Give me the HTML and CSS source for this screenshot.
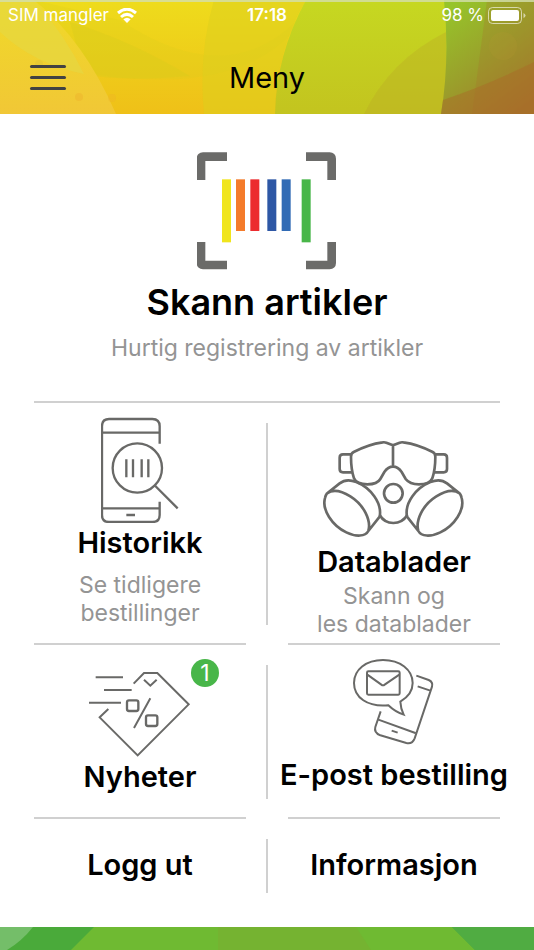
FILE: index.html
```html
<!DOCTYPE html>
<html lang="no">

<head>
    <meta charset="utf-8">
    <meta name="viewport" content="width=device-width, initial-scale=1">
    <title>Meny</title>
    <link rel="stylesheet" href="styles.css">
</head>

<body>
    <header class="header">
        <svg class="header-art" viewBox="0 0 534 114" preserveAspectRatio="none" aria-hidden="true">
            <defs>
                <linearGradient id="yellow" x1="0" y1="0" x2="0" y2="1">
                    <stop offset="0" stop-color="#eedc1c" />
                    <stop offset="1" stop-color="#efc018" />
                </linearGradient>
                <linearGradient id="pale" x1="0" y1="0" x2="0" y2="1">
                    <stop offset="0" stop-color="#f0da28" />
                    <stop offset="1" stop-color="#f1c736" />
                </linearGradient>
                <linearGradient id="lime" x1="0" y1="0" x2="0" y2="1">
                    <stop offset="0" stop-color="#c6d821" />
                    <stop offset="1" stop-color="#c3c41f" />
                </linearGradient>
                <linearGradient id="earth" x1="0.200" y1="0" x2="0.800" y2="1">
                    <stop offset="0" stop-color="#96c42a" />
                    <stop offset="0.5" stop-color="#9aa02b" />
                    <stop offset="1" stop-color="#a4782b" />
                </linearGradient>
            </defs>
            <rect width="534" height="114" fill="url(#yellow)" />
            <path d="M0 32Q60 84 180 79Q280 72 314 0Q240 100 120 20L34 0Z" fill="#d8cc1e" opacity="0.2" />
            <path d="M70 22Q130 40 190 76Q120 82 84 74Z" fill="#d8cc1e" opacity="0.35" />
            <path d="M204 0H306Q276 50 275 114H204Q198 55 214 0Z" fill="#dccf1e" opacity="0.5" />
            <path d="M0 0H34Q84 40 116 114H0Z" fill="url(#pale)" />
            <path d="M0 32Q34 64 84 74Q65 35 34 0H0Z" fill="#e2da48" opacity="0.5" />
            <path d="M306 0H534V114H275Q276 55 306 0Z" fill="url(#lime)" />
            <path d="M364 114Q390 60 446 32V114Z" fill="#bba824" opacity="0.35" />
            <path d="M444 0H534V114H441Q450 60 444 0Z" fill="url(#earth)" />
            <path d="M487 0H534V114H472Q480 55 487 0Z" fill="#a66e2c" opacity="0.25" />
            <path d="M443 100Q490 84 534 62V114H441Z" fill="#aa6828" opacity="0.45" />
            <circle cx="503" cy="46" r="14" fill="#b99a39" opacity="0.15" />
            <circle cx="79" cy="97" r="4" fill="#eeb02b" opacity="0.4" />
            <circle cx="112" cy="98" r="4" fill="#eeb02b" opacity="0.3" />
            <circle cx="39" cy="64" r="4" fill="#ddc13a" opacity="0.4" />
            <rect width="534" height="2" fill="#d3dfae" opacity="0.8" />
        </svg>
        <div class="header-content">
            <div class="status-bar">
                <div class="status-left">
                    <span>SIM mangler</span>
                    <svg width="20" height="15" viewBox="0 0 60 45" aria-label="Wi-Fi">
                        <path d="M3 15Q30-8 57 15M12 27Q30 11 48 27" fill="none" stroke="#fff" stroke-width="9" />
                        <path d="M19 34Q30 25 41 34L30 45Z" fill="#fff" />
                    </svg>
                </div>
                <span class="status-time">17:18</span>
                <div class="status-right">
                    <span>98 %</span>
                    <svg width="38" height="17" viewBox="0 0 38 17" aria-label="Batteri">
                        <rect x="0.5" y="0.5" width="33" height="16" rx="4" fill="none" stroke="#fff" opacity="0.6" />
                        <rect x="3" y="3" width="28" height="11" rx="2" fill="#fff" />
                        <path d="M35.500 6v5q2-1 2-2.500t-2-2.500z" fill="#fff" opacity="0.6" />
                    </svg>
                </div>
            </div>
            <div class="title-bar">
                <button class="menu-button" type="button" aria-label="Åpne meny">
                    <span></span>
                    <span></span>
                    <span></span>
                </button>
                <h1>Meny</h1>
            </div>
        </div>
    </header>

    <main class="menu">
        <a class="scan" href="#">
            <svg width="140" height="118" viewBox="51 36 420 354" aria-hidden="true">
                <path d="M63 120V56Q63 50 69 50H141M378 50H449Q455 50 455 56V120M63 306V369Q63 375 69 375H141M378 375H449Q455 375 455 369V306" fill="none" stroke="#6b6b69" stroke-width="26" />
                <rect x="126" y="118" width="27" height="189" fill="#f0e51d" />
                <rect x="168" y="118" width="27" height="155" fill="#f47b2b" />
                <rect x="211" y="118" width="27" height="155" fill="#ec2c2f" />
                <rect x="262" y="118" width="27" height="155" fill="#2e57a5" />
                <rect x="305" y="118" width="27" height="155" fill="#316bb5" />
                <rect x="365" y="118" width="27" height="189" fill="#48b649" />
            </svg>
            <h2>Skann artikler</h2>
            <p>Hurtig registrering av artikler</p>
        </a>

        <div class="row">
            <a class="tile" href="#">
                <svg class="icon" width="78" height="106" viewBox="36 22 234 318" aria-hidden="true">
                    <path d="M212 102V50Q212 28 190 28H60Q39 28 39 50V316Q39 337 60 337H190Q212 337 212 316V276M39 69H212M39 296H212M112 316H138" stroke-width="7" />
                    <circle cx="145" cy="175" r="74" stroke-width="7" />
                    <path d="M112 149V203M132 149V203M158 149V203M178 149V203M199 229L266 296" stroke-width="7" />
                </svg>
                <h3>Historikk</h3>
                <p class="spaced">Se tidligere<br>bestillinger</p>
            </a>
            <div class="divider"></div>
            <a class="tile tile-low" href="#">
                <svg class="icon" width="142" height="98" viewBox="24 30 426 294" aria-hidden="true">
                    <g stroke-width="8">
                        <path d="M234 46L214 38Q209 36 203 37Q160 43 116 66Q108 70 108 80Q108 118 117 145Q124 163 157 163Q187 163 196 147L208 126Q219 110 234 110Q249 110 260 126L272 147Q284 163 312 163Q344 163 352 145Q361 118 361 80Q361 70 353 66Q309 43 265 37Q259 36 254 38ZM234 46V110" />
                        <path d="M108 73H84Q74 73 74 83V117Q74 127 84 127H112M361 73H386Q396 73 396 83V117Q396 127 386 127H357" />
                        <circle cx="235" cy="190" r="28" />
                        <path d="M194 255Q208 279 235 279Q262 279 277 255" />
                        <path id="filter" d="M36 190Q62 172 106 199C148 225 169 273 160 303C151 320 123 321 94 307C51 286 20 239 30 204Q32 195 36 190L74 160Q94 144 124 156C166 173 202 218 194 260L160 303" />
                        <use href="#filter" transform="matrix(-1 0 0 1 470 0)" />
                    </g>
                </svg>
                <h3>Datablader</h3>
                <p>Skann og<br>les datablader</p>
            </a>
        </div>

        <div class="row">
            <a class="tile tile-news" href="#">
                <div class="icon-badge">
                    <svg class="icon" width="102" height="86" viewBox="27 60 306 258" aria-hidden="true">
                        <path d="M161 98L192 66H232L326 160L173 313L59 199L85 174M192 86L211 104L230 86M211 142L162 231M47 79H129M72 117H155M27 155H123" stroke-width="6" />
                        <rect x="141" y="148" width="34" height="32" rx="6" stroke-width="7" />
                        <rect x="198" y="193" width="34" height="32" rx="6" stroke-width="7" />
                    </svg>
                    <span class="badge">1</span>
                </div>
                <h3>Nyheter</h3>
            </a>
            <div class="divider"></div>
            <a class="tile tile-mail" href="#">
                <svg class="icon" width="82" height="88" viewBox="39 28 246 264" aria-hidden="true">
                    <g stroke-width="6">
                        <path d="M145 167C82 173 42 143 42 100C42 60 78 31 129 31C180 31 218 60 218 100Q218 134 181 156Q182 177 191 195Q166 187 145 167Z" />
                        <rect x="81" y="65" width="98" height="70" rx="4" />
                        <path d="M82 75L124 105Q129 109 134 105L178 75" />
                        <path d="M229 78L266 91Q280 97 276 111L224 266Q217 284 199 280L121 257Q101 249 106 232L122 185M233 110L271 123M115 210L226 250M155 243L173 249" />
                    </g>
                </svg>
                <h3>E-post bestilling</h3>
            </a>
        </div>

        <div class="row row-last">
            <a class="tile" href="#">
                <h3>Logg ut</h3>
            </a>
            <div class="divider"></div>
            <a class="tile" href="#">
                <h3>Informasjon</h3>
            </a>
        </div>
    </main>

    <footer class="footer">
        <svg viewBox="0 0 534 23" preserveAspectRatio="none" aria-hidden="true">
            <rect width="534" height="23" fill="#4aaa3a" />
            <path d="M0 0H33Q22 14 7 23H0Z" fill="#74be69" />
            <path d="M94 0H452L475 23H71Z" fill="#6fba32" />
            <path d="M218 0H356L371 23H218Z" fill="#75b331" />
            <path d="M452 0H534V23H475Z" fill="#50ac42" />
        </svg>
    </footer>
</body>

</html>
```

FILE: styles.css
```css
:root {
    --text: #000;
    --text-secondary: #949494;
    --line: #d0d0d0;
    --icon: #696967;
}

* {
    margin: 0;
    padding: 0;
    box-sizing: border-box;
}

body {
    display: flex;
    flex-direction: column;
    min-height: 100vh;
    font-family: Inter, 'Liberation Sans', sans-serif;
    color: var(--text);
    background: white;
}

a {
    color: inherit;
    text-decoration: none;
}

/* Header */
.header {
    display: grid;
}

.header-art,
.header-content {
    grid-area: 1 / 1;
    width: 100%;
    height: 114px;
}

.status-bar {
    display: grid;
    grid-template-columns: 1fr auto 1fr;
    align-items: center;
    height: 30px;
    padding: 0 8px;
    font-size: 17px;
    color: white;
}

.status-left,
.status-right {
    display: flex;
    align-items: center;
    gap: 8px;
}

.status-right {
    justify-content: flex-end;
    gap: 4px;
}

.status-time {
    font-weight: 600;
}

.title-bar {
    display: grid;
    grid-template-columns: 1fr auto 1fr;
    align-items: center;
    height: 84px;
    padding: 10px 28px 0;
}

.title-bar h1 {
    font-size: 29px;
    font-weight: 400;
}

.menu-button {
    display: flex;
    flex-direction: column;
    gap: 8px;
    width: 40px;
    padding: 2px;
    border: none;
    background: none;
    cursor: pointer;
}

.menu-button span {
    height: 3px;
    border-radius: 2px;
    background: #424242;
}

/* Menu */
.menu {
    flex: 1;
    padding: 0 34px;
}

.scan {
    display: flex;
    flex-direction: column;
    align-items: center;
    padding: 38px 0 39px;
    border-bottom: 2px solid var(--line);
}

.scan h2 {
    margin-top: 8px;
    font-size: 36px;
    font-weight: 600;
    line-height: 48px;
}

.scan p {
    margin-top: 8px;
}

.scan p,
.tile p {
    font-size: 23px;
    line-height: 28px;
    text-align: center;
    color: var(--text-secondary);
}

.row {
    display: flex;
}

.tile {
    display: flex;
    flex: 1 1 0;
    flex-direction: column;
    align-items: center;
    min-width: 0;
    padding: 14px 0 16px;
    border-bottom: 2px solid var(--line);
}

.tile h3 {
    font-size: 29px;
    font-weight: 600;
    line-height: 40px;
    white-space: nowrap;
}

.tile .spaced {
    margin-top: 8px;
}

.tile-low {
    padding: 37px 0 4px;
}

.tile-low h3 {
    margin-top: 4px;
}

.tile-news,
.tile-mail {
    padding-bottom: 20px;
}

.tile-mail h3 {
    margin-top: 8px;
}

.divider {
    width: 2px;
    margin: 20px;
    background: var(--line);
}

.row-last .tile {
    padding: 26px 0 28px;
    border-bottom: none;
}

.icon {
    display: block;
    flex: none;
    fill: none;
    stroke: var(--icon);
}

.icon-badge {
    position: relative;
    padding-top: 12px;
}

.badge {
    position: absolute;
    top: 0;
    right: -28px;
    width: 28px;
    height: 28px;
    border-radius: 50%;
    font-size: 23px;
    line-height: 28px;
    text-align: center;
    color: white;
    background: #48b649;
}

/* Footer */
.footer svg {
    display: block;
    width: 100%;
    height: 23px;
}
```
